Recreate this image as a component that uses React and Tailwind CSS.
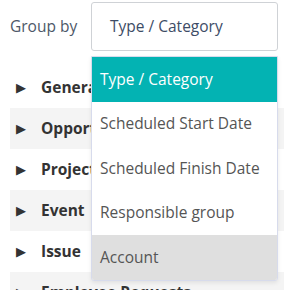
const rows = [
  { label: "General", shaded: false },
  { label: "Opportunity", shaded: true },
  { label: "Project", shaded: false },
  { label: "Event", shaded: true },
  { label: "Issue", shaded: false },
  { label: "Employee Requests", shaded: true },
];

const options = [
  "Type / Category",
  "Scheduled Start Date",
  "Scheduled Finish Date",
  "Responsible group",
  "Account",
];

export default function App() {
  return (
    <div
      className="relative w-[284px] h-[290px] overflow-hidden bg-white"
      style={{ fontFamily: '"Open Sans", "Noto Sans", sans-serif' }}
    >
      <div className="flex items-center pl-[10px] pt-[2px] h-[51px]">
        <span className="w-[81px] text-[15.5px] text-[#4d5868]">Group by</span>
        <div className="w-[187px] h-[49px] border border-[#cfd2d6] rounded-[3px] flex items-center pl-[18px] text-[15.5px] text-[#3d4c66]">
          Type / Category
        </div>
      </div>

      <div className="mt-[16px] pl-[10px]">
        {rows.map((r) => (
          <div
            key={r.label}
            className={`flex items-center h-[41px] w-[300px] whitespace-nowrap ${
              r.shaded ? "bg-[#f4f4f4]" : ""
            }`}
          >
            <span className="ml-[6px] w-[25px] text-[13px] text-[#333]">▶</span>
            <span className="text-[15.5px] font-bold text-[#333]">{r.label}</span>
          </div>
        ))}
      </div>

      <div className="absolute left-[91px] top-[56px] w-[187px] bg-white border border-[#d7dbec] rounded-b-[3px] shadow-[0_2px_4px_rgba(0,0,0,0.08)] overflow-hidden">
        {options.map((o, i) => (
          <div
            key={o}
            className={`h-[44.6px] flex items-center pl-[8px] text-[15.5px] whitespace-nowrap ${
              i === 0
                ? "bg-[#03b3b3] text-white"
                : i === options.length - 1
                ? "bg-[#dfdfdf] text-[#555]"
                : "text-[#555]"
            }`}
          >
            {o}
          </div>
        ))}
      </div>
    </div>
  );
}
